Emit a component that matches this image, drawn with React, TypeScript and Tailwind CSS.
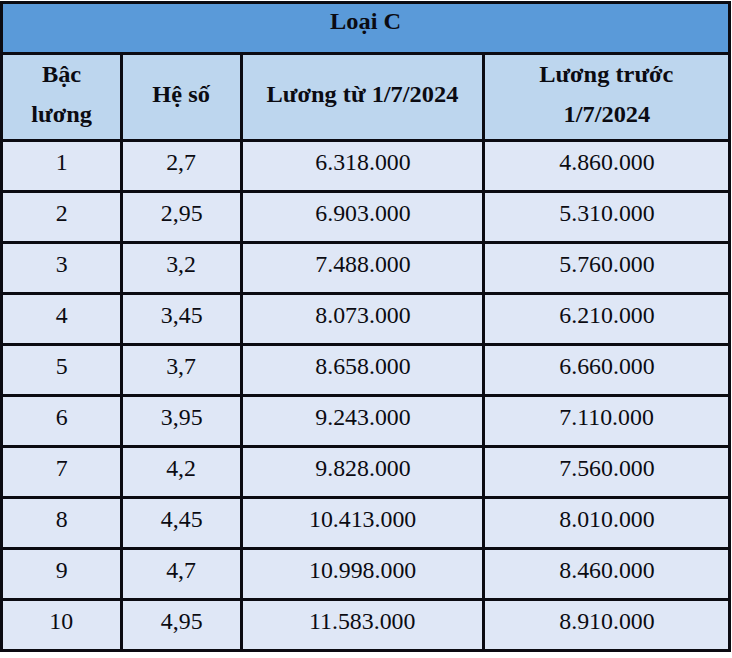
import React from "react";

const rows: [string, string, string, string][] = [
  ["1", "2,7", "6.318.000", "4.860.000"],
  ["2", "2,95", "6.903.000", "5.310.000"],
  ["3", "3,2", "7.488.000", "5.760.000"],
  ["4", "3,45", "8.073.000", "6.210.000"],
  ["5", "3,7", "8.658.000", "6.660.000"],
  ["6", "3,95", "9.243.000", "7.110.000"],
  ["7", "4,2", "9.828.000", "7.560.000"],
  ["8", "4,45", "10.413.000", "8.010.000"],
  ["9", "4,7", "10.998.000", "8.460.000"],
  ["10", "4,95", "11.583.000", "8.910.000"],
];

const serif = "font-['Liberation_Serif','Times_New_Roman',serif]";
const th = `border-[3px] border-[#0b0b12] bg-[#bdd6ee] text-[23px] font-bold leading-[40px] text-center align-middle pb-[4px] ${serif}`;

function S({ children }: { children: React.ReactNode }) {
  return <span className="inline-block scale-x-[1.06]">{children}</span>;
}

export default function App() {
  return (
    <div className={`w-[732px] h-[658px] bg-white pt-[1px] ${serif}`}>
      <table className={`table-fixed border-collapse w-[728px] text-[#0b0b12] ${serif}`}>
        <colgroup>
          <col className="w-[120px]" />
          <col className="w-[120px]" />
          <col className="w-[242px]" />
          <col className="w-[246px]" />
        </colgroup>
        <thead>
          <tr className="h-[51px]">
            <th
              colSpan={4}
              className={`border-[3px] border-[#0b0b12] bg-[#5a9ad9] text-[23px] font-bold leading-[28px] pb-[13px] text-center align-middle ${serif}`}
            >
              <S>Loại C</S>
            </th>
          </tr>
          <tr className="h-[86px]">
            <th className={th}>
              <S>Bậc</S>
              <br />
              <S>lương</S>
            </th>
            <th className={th}>
              <S>Hệ số</S>
            </th>
            <th className={th}>
              <S>Lương từ 1/7/2024</S>
            </th>
            <th className={th}>
              <S>Lương trước</S>
              <br />
              <S>1/7/2024</S>
            </th>
          </tr>
        </thead>
        <tbody>
          {rows.map((r) => (
            <tr key={r[0]} className="h-[51px]">
              {r.map((c, i) => (
                <td
                  key={i}
                  className={`border-[3px] border-[#0b0b12] bg-[#dfe7f6] text-[22.5px] leading-[28px] text-center align-middle pb-[6px] ${serif}`}
                >
                  <S>{c}</S>
                </td>
              ))}
            </tr>
          ))}
        </tbody>
      </table>
    </div>
  );
}
